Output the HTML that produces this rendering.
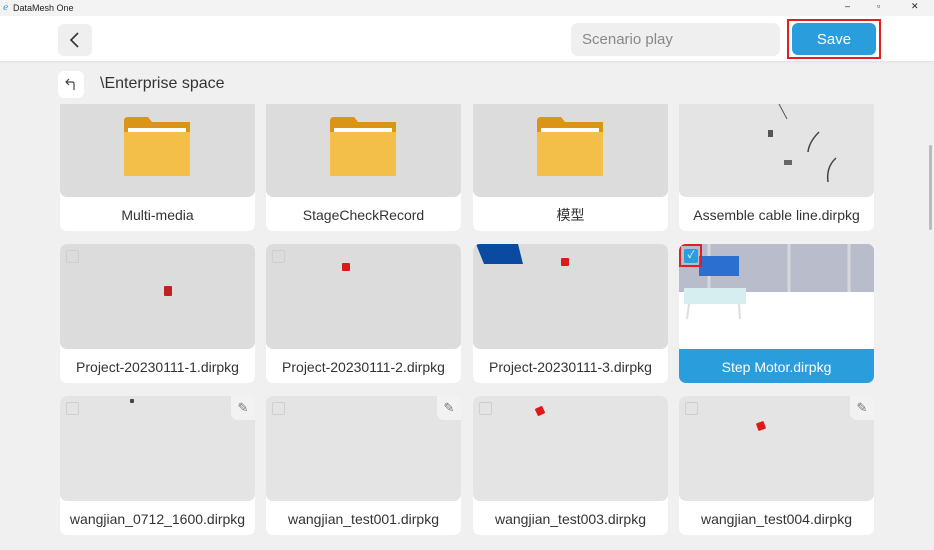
<!DOCTYPE html>
<html><head><meta charset="utf-8"><style>
*{margin:0;padding:0;box-sizing:border-box}
body{width:934px;height:550px;overflow:hidden;background:#f0f0f0;font-family:"Liberation Sans","Noto Sans CJK SC",sans-serif;position:relative}
.title{position:absolute;left:0;top:0;width:934px;height:16px;background:#f3f3f3;font-size:9px;color:#222}
.hdr{position:absolute;left:0;top:16px;width:934px;height:45px;background:#fff;box-shadow:0 1px 2px #e0e0e0}
.back{position:absolute;left:58px;top:8px;width:34px;height:32px;background:#efefef;border-radius:6px}
.inp{position:absolute;left:571px;top:7px;width:209px;height:33px;background:#efefef;border-radius:7px;color:#888;font-size:15px;line-height:33px;padding-left:11px}
.save{position:absolute;left:792px;top:7px;width:84px;height:32px;background:#2a9ddc;border-radius:6px;color:#fff;font-size:15px;line-height:34px;text-align:center}
.savebox{position:absolute;left:787px;top:3px;width:94px;height:40px;border:2px solid #e02020}
.up{position:absolute;left:58px;top:71px;width:26px;height:27px;background:#fff;border-radius:6px}
.path{position:absolute;left:100px;top:75px;font-size:16px;color:#333}
.grid{position:absolute;left:0;top:104px;width:934px;height:436px;overflow:hidden}
.card{position:absolute;width:195px;height:139px;background:#fff;border-radius:7px;overflow:hidden}
.th{position:absolute;left:0;top:0;width:195px;height:105px;background:#dcdcdc;border-radius:7px}
.lb{position:absolute;left:0;top:106px;width:195px;height:34px;text-align:center;font-size:14px;line-height:34px;color:#333}
.light .th{background:#e4e4e4}
.cb{position:absolute;left:6px;top:6px;width:13px;height:13px;border:1px solid #cfcfcf;border-radius:2px}
.pen{position:absolute;right:0;top:0;width:24px;height:24px;background:#f2f2f2;border-radius:0 7px 0 7px;font-size:13px;color:#777;text-align:center;line-height:24px}
.fold{position:absolute;left:64px;top:25px;width:66px;height:59px}
.sel{background:#2a9ddc}
.sel .lb{color:#fff}
.cube{position:absolute;width:8px;height:8px;background:#e01818;border-radius:1px}
.sb{position:absolute;left:929px;top:145px;width:3px;height:85px;background:#bbb;border-radius:2px}
</style></head><body>
<div class="title"><span style="position:absolute;left:3px;top:2px;color:#2a9ddc">ℯ</span><span style="position:absolute;left:13px;top:3px">DataMesh One</span>
<span style="position:absolute;left:845px;top:1px">–</span><span style="position:absolute;left:877px;top:1px">▫</span><span style="position:absolute;left:911px;top:1px">✕</span></div>
<div class="hdr">
<div class="back"><svg width="34" height="32"><path d="M20 9 L13 16 L20 23" fill="none" stroke="#333" stroke-width="1.6"/></svg></div>
<div class="inp">Scenario play</div>
<div class="save">Save</div><div class="savebox"></div>
</div>
<div class="up"><svg width="26" height="27"><path d="M11 8 L8 11 L11 14 M8 11 H14 Q16 11 16 13 V19" fill="none" stroke="#444" stroke-width="1.2"/></svg></div>
<div class="path">\Enterprise space</div>
<div class="grid">
<div class="card" style="left:60px;top:-12px"><div class="th"></div><svg class="fold" viewBox="0 0 66 59"><path d="M0 4 Q0 0 4 0 H24 L28 5 H66 V59 H0Z" fill="#dc9418"/><rect x="4" y="11" width="58" height="6" fill="#fff"/><rect x="0" y="15" width="66" height="44" fill="#f4bf48"/></svg><div class="lb">Multi-media</div></div>
<div class="card" style="left:266px;top:-12px"><div class="th"></div><svg class="fold" viewBox="0 0 66 59"><path d="M0 4 Q0 0 4 0 H24 L28 5 H66 V59 H0Z" fill="#dc9418"/><rect x="4" y="11" width="58" height="6" fill="#fff"/><rect x="0" y="15" width="66" height="44" fill="#f4bf48"/></svg><div class="lb">StageCheckRecord</div></div>
<div class="card" style="left:473px;top:-12px"><div class="th"></div><svg class="fold" viewBox="0 0 66 59"><path d="M0 4 Q0 0 4 0 H24 L28 5 H66 V59 H0Z" fill="#dc9418"/><rect x="4" y="11" width="58" height="6" fill="#fff"/><rect x="0" y="15" width="66" height="44" fill="#f4bf48"/></svg><div class="lb">模型</div></div>
<div class="card light" style="left:679px;top:-12px"><div class="th"><svg width="195" height="105"><path d="M100 12 L108 27" stroke="#555" fill="none"/><path d="M140 40 Q130 50 129 60" stroke="#444" stroke-width="1.5" fill="none"/><path d="M157 66 Q147 75 149 90" stroke="#444" stroke-width="1.5" fill="none"/><rect x="89" y="38" width="5" height="7" fill="#555"/><rect x="105" y="68" width="8" height="5" fill="#666"/></svg></div><div class="lb">Assemble cable line.dirpkg</div></div>
<div class="card" style="left:60px;top:140px"><div class="th"><div class="cb"></div><div class="cube" style="left:104px;top:42px;height:10px;background:#c02020"></div></div><div class="lb">Project-20230111-1.dirpkg</div></div>
<div class="card" style="left:266px;top:140px"><div class="th"><div class="cb"></div><div class="cube" style="left:76px;top:19px"></div></div><div class="lb">Project-20230111-2.dirpkg</div></div>
<div class="card" style="left:473px;top:140px"><div class="th"><svg width="60" height="25" style="position:absolute;left:3px;top:0"><path d="M0 0 H42 L47 20 H8Z" fill="#0a4aa0"/></svg><div class="cube" style="left:88px;top:14px"></div></div><div class="lb">Project-20230111-3.dirpkg</div></div>
<div class="card sel" style="left:679px;top:140px"><div class="th" style="background:#fff;border-radius:7px 7px 0 0"><svg width="195" height="105"><rect x="0" y="0" width="195" height="48" fill="#b8bccb"/><g stroke="#d8d8dc" stroke-width="3"><line x1="30" y1="0" x2="30" y2="48"/><line x1="110" y1="0" x2="110" y2="48"/><line x1="170" y1="0" x2="170" y2="48"/></g><rect x="20" y="12" width="40" height="20" fill="#2b6fd0"/><rect x="5" y="44" width="62" height="16" fill="#d6eef0"/><line x1="10" y1="60" x2="8" y2="75" stroke="#ddd" stroke-width="2"/><line x1="60" y1="60" x2="61" y2="75" stroke="#ddd" stroke-width="2"/></svg><div style="position:absolute;left:5px;top:5px;width:14px;height:14px;background:#2a9ddc;border-radius:2px;color:#fff;font-size:10px;line-height:14px;text-align:center">✓</div><div style="position:absolute;left:0;top:0;width:23px;height:23px;border:2px solid #e02020"></div></div><div class="lb">Step Motor.dirpkg</div></div>
<div class="card light" style="left:60px;top:292px"><div class="th"><div class="cb"></div><div class="pen">✎</div><div class="cube" style="left:70px;top:3px;width:4px;height:4px;background:#444"></div></div><div class="lb">wangjian_0712_1600.dirpkg</div></div>
<div class="card light" style="left:266px;top:292px"><div class="th"><div class="cb"></div><div class="pen">✎</div></div><div class="lb">wangjian_test001.dirpkg</div></div>
<div class="card light" style="left:473px;top:292px"><div class="th"><div class="cb"></div><div class="cube" style="left:63px;top:11px;transform:rotate(-25deg)"></div></div><div class="lb">wangjian_test003.dirpkg</div></div>
<div class="card light" style="left:679px;top:292px"><div class="th"><div class="cb"></div><div class="pen">✎</div><div class="cube" style="left:78px;top:26px;transform:rotate(-20deg)"></div></div><div class="lb">wangjian_test004.dirpkg</div></div>
</div>
<div class="sb"></div>
</body></html>
